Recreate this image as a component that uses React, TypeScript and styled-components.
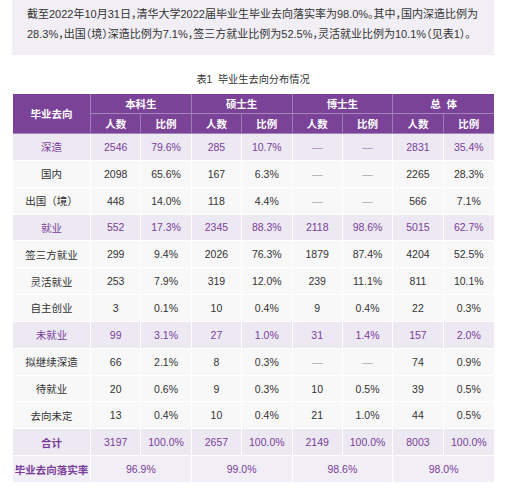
import React from "react";
import styled, { createGlobalStyle } from "styled-components";

const Global = createGlobalStyle`
  html, body { margin: 0; padding: 0; background: #ffffff; }
  body { font-family: "Liberation Sans", "Noto Sans CJK SC", sans-serif; }
`;

const Page = styled.div`
  width: 516px;
  padding: 0 0 0 12px;
  box-sizing: border-box;
`;

const Intro = styled.div`
  width: 482px;
  box-sizing: border-box;
  background: #f1eef5;
  padding: 5px 0 11px 15px;
  font-size: 11px;
  line-height: 19.5px;
  color: #333333;
  font-feature-settings: "halt";
`;

const Caption = styled.div`
  width: 482px;
  text-align: center;
  font-size: 10.2px;
  color: #333333;
  margin-top: 17px;
  line-height: 16px;
  height: 16px;
`;

const Table = styled.table`
  margin-top: 6px;
  margin-left: 1px;
  width: 481px;
  table-layout: fixed;
  border-collapse: separate;
  border-spacing: 0;
  font-size: 10.5px;
`;

const HeadCell = styled.th`
  background: #7b4398;
  color: #ffffff;
  font-weight: 700;
  height: 19px;
  padding: 0;
  text-align: center;
  border-right: 1px solid #9f7bb7;
  border-bottom: 1px solid #a684bc;
  &:last-child { border-right: none; }
`;

type Kind = "cat" | "sub" | "total" | "rate";

const Cell = styled.td<{ $kind: Kind; $label?: boolean }>`
  height: 25.85px;
  padding: 0;
  text-align: center;
  border-right: 1px solid #ffffff;
  border-bottom: 1px solid #ffffff;
  background: ${(p) => (p.$kind === "sub" ? "#f8f8f8" : p.$kind === "rate" ? "#f1eef6" : "#ede9f3")};
  color: ${(p) => (p.$kind === "sub" ? "#333333" : "#7a3d99")};
  font-weight: ${(p) => (p.$label && (p.$kind === "total" || p.$kind === "rate") ? 700 : 400)};
  &:last-child { border-right: none; }
`;

const Dash = styled.span<{ $kind: Kind }>`
  color: ${(p) => (p.$kind === "sub" ? "#a8a8a8" : "#a58cbc")};
`;

type Row = { label: string; kind: Kind; vals: string[] };

const rows: Row[] = [
  { label: "深造", kind: "cat", vals: ["2546", "79.6%", "285", "10.7%", "—", "—", "2831", "35.4%"] },
  { label: "国内", kind: "sub", vals: ["2098", "65.6%", "167", "6.3%", "—", "—", "2265", "28.3%"] },
  { label: "出国（境）", kind: "sub", vals: ["448", "14.0%", "118", "4.4%", "—", "—", "566", "7.1%"] },
  { label: "就业", kind: "cat", vals: ["552", "17.3%", "2345", "88.3%", "2118", "98.6%", "5015", "62.7%"] },
  { label: "签三方就业", kind: "sub", vals: ["299", "9.4%", "2026", "76.3%", "1879", "87.4%", "4204", "52.5%"] },
  { label: "灵活就业", kind: "sub", vals: ["253", "7.9%", "319", "12.0%", "239", "11.1%", "811", "10.1%"] },
  { label: "自主创业", kind: "sub", vals: ["3", "0.1%", "10", "0.4%", "9", "0.4%", "22", "0.3%"] },
  { label: "未就业", kind: "cat", vals: ["99", "3.1%", "27", "1.0%", "31", "1.4%", "157", "2.0%"] },
  { label: "拟继续深造", kind: "sub", vals: ["66", "2.1%", "8", "0.3%", "—", "—", "74", "0.9%"] },
  { label: "待就业", kind: "sub", vals: ["20", "0.6%", "9", "0.3%", "10", "0.5%", "39", "0.5%"] },
  { label: "去向未定", kind: "sub", vals: ["13", "0.4%", "10", "0.4%", "21", "1.0%", "44", "0.5%"] },
  { label: "合计", kind: "total", vals: ["3197", "100.0%", "2657", "100.0%", "2149", "100.0%", "8003", "100.0%"] },
];

const rates = ["96.9%", "99.0%", "98.6%", "98.0%"];

export default function App() {
  return (
    <>
      <Global />
      <Page>
        <Intro>
          截至2022年10月31日，清华大学2022届毕业生毕业去向落实率为98.0%。其中，国内深造比例为28.3%，出国（境）深造比例为7.1%，签三方就业比例为52.5%，灵活就业比例为10.1%（见表1）。
        </Intro>
        <Caption>表1&nbsp;&nbsp;毕业生去向分布情况</Caption>
        <Table>
          <colgroup>
            <col style={{ width: "78px" }} />
            {Array.from({ length: 8 }).map((_, i) => (
              <col key={i} />
            ))}
          </colgroup>
          <thead>
            <tr>
              <HeadCell rowSpan={2}>毕业去向</HeadCell>
              <HeadCell colSpan={2}>本科生</HeadCell>
              <HeadCell colSpan={2}>硕士生</HeadCell>
              <HeadCell colSpan={2}>博士生</HeadCell>
              <HeadCell colSpan={2}>总&nbsp;&nbsp;体</HeadCell>
            </tr>
            <tr>
              {["本", "硕", "博", "总"].map((k) => (
                <React.Fragment key={k}>
                  <HeadCell>人数</HeadCell>
                  <HeadCell>比例</HeadCell>
                </React.Fragment>
              ))}
            </tr>
          </thead>
          <tbody>
            {rows.map((r) => (
              <tr key={r.label}>
                <Cell $kind={r.kind} $label>
                  {r.label}
                </Cell>
                {r.vals.map((v, i) => (
                  <Cell key={i} $kind={r.kind}>
                    {v === "—" ? <Dash $kind={r.kind}>—</Dash> : v}
                  </Cell>
                ))}
              </tr>
            ))}
            <tr>
              <Cell $kind="rate" $label>
                毕业去向落实率
              </Cell>
              {rates.map((v) => (
                <Cell key={v} $kind="rate" colSpan={2}>
                  {v}
                </Cell>
              ))}
            </tr>
          </tbody>
        </Table>
      </Page>
    </>
  );
}
